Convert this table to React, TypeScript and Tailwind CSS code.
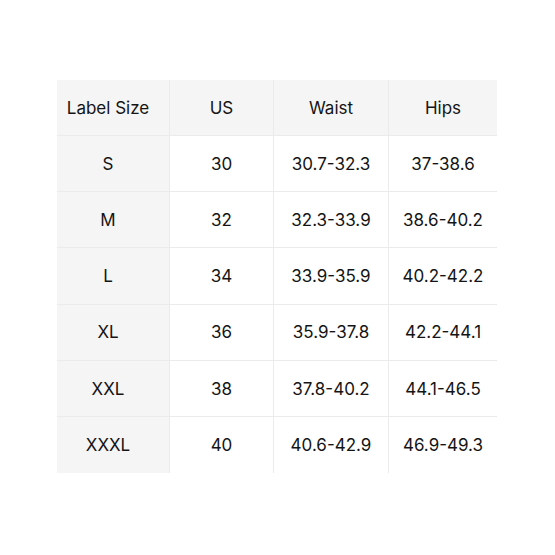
import React from "react";

const header = ["Label Size", "US", "Waist", "Hips"];
const rows = [
  ["S", "30", "30.7-32.3", "37-38.6"],
  ["M", "32", "32.3-33.9", "38.6-40.2"],
  ["L", "34", "33.9-35.9", "40.2-42.2"],
  ["XL", "36", "35.9-37.8", "42.2-44.1"],
  ["XXL", "38", "37.8-40.2", "44.1-46.5"],
  ["XXXL", "40", "40.6-42.9", "46.9-49.3"],
];

export default function App() {
  return (
    <div className="w-[555px] h-[555px] bg-white pt-[80px] pl-[57px]" style={{ fontFamily: "Inter, 'Liberation Sans', sans-serif" }}>
      <div className="grid grid-cols-[112px_104px_115px_109px] w-[440px] text-[17px] text-[#141414]">
        {header.map((h, i) => (
          <div key={h} className={`h-[56px] pt-[2px] flex items-center justify-center bg-[#f5f5f5] border-b border-[#ebebeb] ${i > 0 ? "border-l" : "pr-[10px]"}`}>
            {h}
          </div>
        ))}
        {rows.map((r, ri) =>
          r.map((c, ci) => (
            <div
              key={ri + "-" + ci}
              className={`h-[56.2px] pt-[2px] flex items-center justify-center ${ci === 0 ? "bg-[#f5f5f5] pr-[10px]" : "bg-white border-l border-[#ebebeb]"} ${ri < rows.length - 1 ? "border-b border-[#ebebeb]" : ""}`}
            >
              {c}
            </div>
          ))
        )}
      </div>
    </div>
  );
}
